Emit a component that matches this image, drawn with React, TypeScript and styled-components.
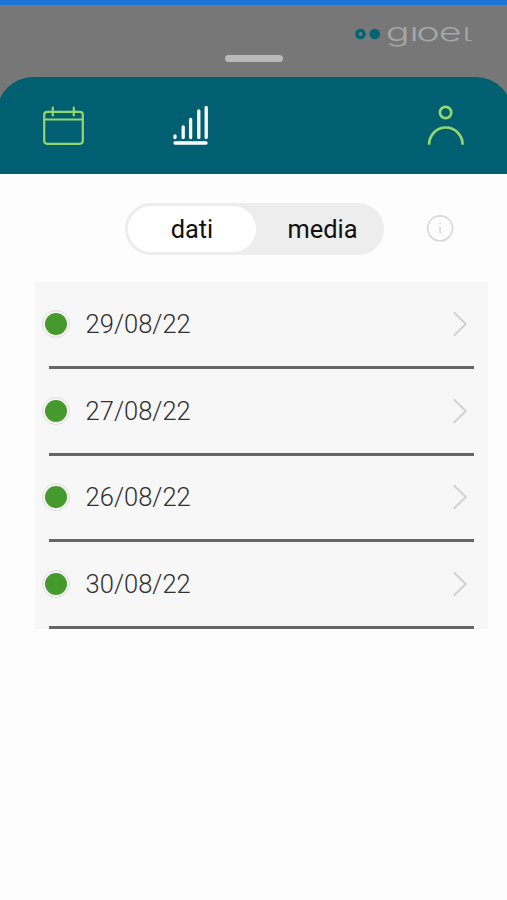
import React from "react";
import styled, { createGlobalStyle } from "styled-components";

const GlobalStyle = createGlobalStyle`
  * { box-sizing: border-box; }
  body { margin: 0; background: #fdfdfd; font-family: Roboto, "Liberation Sans", sans-serif; }
`;

const Screen = styled.div`
  height: 900px;
  overflow: hidden;
  display: flex;
  flex-direction: column;
  background: #fdfdfd;
`;

const Backdrop = styled.div`
  background: #777777;
  border-top: 5px solid #1a75d6;
`;

const BrandBar = styled.div`
  height: 72px;
  display: grid;
  grid-template-columns: 1fr 58px 1fr;
`;

const Handle = styled.div`
  grid-column: 2;
  align-self: start;
  margin-top: 50px;
  height: 7px;
  border-radius: 4px;
  background: #bababa;
`;

const Logo = styled.svg`
  grid-column: 3;
  justify-self: end;
  margin: 17px 29px 0 0;
  overflow: visible;
`;

const Wordmark = styled.text<{ $size?: number; $weight?: number }>`
  font-family: Inter, sans-serif;
  font-weight: ${(p) => p.$weight ?? 300};
  font-size: ${(p) => p.$size ?? 24.5}px;
  font-feature-settings: "cv05" 1;
  fill: #a6a6a8;
`;

const Header = styled.header`
  height: 97px;
  margin: 0 -5px 0 -3px;
  padding: 28px 46px 0 45px;
  display: flex;
  align-items: flex-start;
  border-radius: 36px 36px 0 0;
  background: #006071;
`;

const StatsIcon = styled.svg`
  margin-left: 88px;
`;

const ProfileIcon = styled.svg`
  margin-left: auto;
`;

const Controls = styled.div`
  display: flex;
  align-items: center;
  margin: 29px 0 0 125px;
`;

const Toggle = styled.div`
  display: flex;
  width: 259px;
  height: 52px;
  padding: 3px;
  border-radius: 26px;
  background: #ededed;
`;

const Option = styled.button<{ $active?: boolean }>`
  flex: none;
  width: ${(p) => (p.$active ? 128 : 133)}px;
  height: 46px;
  border: 0;
  padding: 0;
  border-radius: 23px;
  background: ${(p) => (p.$active ? "#ffffff" : "transparent")};
  color: #111111;
  font: 400 25.4px/30px Roboto, "Liberation Sans", sans-serif;
`;

const InfoIcon = styled.svg`
  margin-left: 42px;
`;

const List = styled.ul`
  list-style: none;
  margin: 27px 19px 0 35px;
  padding: 0 14px;
  background: #f7f7f7;
`;

const Row = styled.li`
  height: 86.8px;
  display: flex;
  align-items: center;
  border-bottom: 3px solid #666666;
`;

const Dot = styled.span`
  flex: none;
  width: 28px;
  height: 28px;
  margin-left: -7px;
  border: 1px solid #dddddd;
  border-radius: 50%;
  padding: 2px;
  background: #46992c content-box;
  background-clip: content-box;
`;

const DateText = styled.span`
  margin-left: 15.6px;
  flex: 1;
  color: #303030;
  font-weight: 300;
  font-size: 25.5px;
  line-height: 30px;
`;

const Chevron = styled.svg`
  margin-right: 6px;
`;

const dates = ["29/08/22", "27/08/22", "26/08/22", "30/08/22"];

export default function App() {
  return (
    <Screen>
      <GlobalStyle />
      <Backdrop>
        <BrandBar>
          <Handle />
          <Logo width="124" height="30" viewBox="0 0 124 30">
            <circle cx="6.5" cy="12" r="3.6" fill="none" stroke="#006475" strokeWidth="3.4" />
            <circle cx="20.8" cy="12" r="5.3" fill="#006475" />
            <Wordmark transform="scale(1.62 1)" x="19.6 34.2 38.4 52.3" y="18.6">
              gıoe
            </Wordmark>
            <Wordmark $size={18} $weight={200} transform="scale(2.7 1)" x="39.6" y="18.6">
              l
            </Wordmark>
          </Logo>
        </BrandBar>
        <Header>
          <svg width="42" height="42" viewBox="0 0 42 42" fill="none" stroke="#94d66e" strokeWidth="2.2" strokeLinecap="round">
            <rect x="2.2" y="6.8" width="38.6" height="32" rx="3" />
            <path d="M2.5 14.5H40.5M10.8 2.5V10.5M31.8 2.5V10.5" />
          </svg>
          <StatsIcon width="38" height="42" viewBox="0 0 38 42" fill="none" stroke="#ffffff" strokeWidth="3.3" strokeLinecap="round">
            <path d="M3 31V32.5M11.2 22V32.5M18.6 14.5V32.5M26.8 6V32.5M34.2 2.5V32.5M3 38H34" />
          </StatsIcon>
          <ProfileIcon width="40" height="42" viewBox="0 0 40 42" fill="none" stroke="#94d66e" strokeWidth="2.7">
            <circle cx="19.6" cy="7.5" r="5.7" />
            <path d="M3.1 39.8C3.1 30 10.6 22.5 19.8 22.5S36.6 30 36.6 39.8" />
          </ProfileIcon>
        </Header>
      </Backdrop>
      <Controls>
        <Toggle>
          <Option $active>dati</Option>
          <Option>media</Option>
        </Toggle>
        <InfoIcon width="28" height="28" viewBox="0 0 28 28" fill="none" stroke="#d7d7d7" strokeWidth="1.6">
          <circle cx="14.1" cy="13.3" r="12.4" />
          <path d="M14.1 12V18.5M14.1 7.8V9.6" />
        </InfoIcon>
      </Controls>
      <List>
        {dates.map((date) => (
          <Row key={date}>
            <Dot />
            <DateText>{date}</DateText>
            <Chevron width="16" height="26" viewBox="0 0 16 26" fill="none" stroke="#d2d2d2" strokeWidth="2">
              <path d="M1.7 1.3L13.8 13L1.7 24.7" />
            </Chevron>
          </Row>
        ))}
      </List>
    </Screen>
  );
}
